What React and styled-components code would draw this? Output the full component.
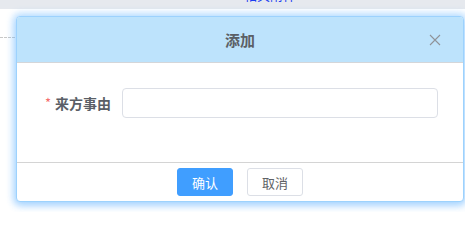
import React from "react";
import styled, { createGlobalStyle } from "styled-components";

const Global = createGlobalStyle`
  html, body { margin: 0; padding: 0; background: #fff; }
  body { font-family: "Noto Sans CJK SC", "Noto Sans", sans-serif; width: 465px; height: 212px; overflow: hidden; }
`;

const Page = styled.div`
  display: flex;
  flex-direction: column;
  width: 465px;
  height: 212px;
  overflow: hidden;
`;

const TopBar = styled.div`
  height: 9px;
  background: #e6e9ee;
  overflow: hidden;
  display: flex;
  justify-content: flex-start;
  padding-left: 244px;
`;

const TopLink = styled.span`
  font-size: 13px;
  line-height: 13px;
  color: #1a3df0;
  margin-top: -12px;
  white-space: nowrap;
`;

const Stage = styled.div`
  display: flex;
  flex-direction: row;
  padding-top: 7px;
`;

const Gutter = styled.div`
  width: 15px;
  margin-top: 21px;
  height: 0;
  border-top: 1px dashed #c8c8c8;
  margin-right: 1px;
`;

const Dialog = styled.div`
  width: 446px;
  height: 184px;
  border: 1px solid #9dd2fd;
  border-radius: 4px;
  background: #fff;
  box-shadow: 0 0 7px 3px rgba(120, 190, 255, 0.45), 0 3px 8px rgba(64, 158, 255, 0.3);
  display: flex;
  flex-direction: column;
  overflow: hidden;
`;

const Header = styled.div`
  height: 45px;
  background: #bde3fc;
  border-bottom: 1px solid #d4d6d9;
  display: flex;
  align-items: center;
  justify-content: center;
  position: relative;
  flex-shrink: 0;
`;

const Title = styled.span`
  font-size: 15px;
  font-weight: 700;
  color: #5b5f66;
`;

const Close = styled.button`
  position: absolute;
  right: 22px;
  top: 17px;
  width: 12px;
  height: 12px;
  padding: 0;
  border: none;
  background: transparent;
  display: flex;
`;

const Body = styled.div`
  flex: 1;
  display: flex;
  align-items: flex-start;
  padding: 25px 25px 0 28px;
  border-bottom: 1px solid #d4d4d4;
`;

const FormItem = styled.div`
  display: flex;
  align-items: center;
  width: 100%;
`;

const Label = styled.label`
  width: 77px;
  flex-shrink: 0;
  font-size: 14px;
  font-weight: 700;
  color: #5a5e66;
  display: flex;
  align-items: center;
  white-space: nowrap;
`;

const Star = styled.span`
  color: #f56c6c;
  font-weight: 400;
  font-size: 13px;
  margin-right: 4px;
  position: relative;
  top: -1px;
`;

const Input = styled.input`
  flex: 1;
  height: 28px;
  box-sizing: content-box;
  border: 1px solid #dcdfe6;
  border-radius: 4px;
  padding: 0 10px;
  outline: none;
  font-size: 13px;
`;

const Footer = styled.div`
  height: 38px;
  flex-shrink: 0;
  display: flex;
  justify-content: center;
  align-items: flex-start;
  padding-top: 5px;
  box-sizing: border-box;
  gap: 14px;
`;

const Button = styled.button`
  width: 56px;
  height: 28px;
  border-radius: 3px;
  font-family: "Noto Sans CJK SC", sans-serif;
  font-size: 13px;
  padding: 0;
  border: 1px solid ${(p) => (p.$primary ? "#409eff" : "#dcdfe6")};
  background: ${(p) => (p.$primary ? "#409eff" : "#fff")};
  color: ${(p) => (p.$primary ? "#fff" : "#606266")};
`;

export default function App() {
  return (
    <Page>
      <Global />
      <TopBar>
        <TopLink>相关附件</TopLink>
      </TopBar>
      <Stage>
        <Gutter />
        <Dialog>
          <Header>
            <Title>添加</Title>
            <Close aria-label="close">
              <svg width="12" height="12" viewBox="0 0 12 12">
                <path d="M1 1L11 11M11 1L1 11" stroke="#8f9399" strokeWidth="1.1" fill="none" />
              </svg>
            </Close>
          </Header>
          <Body>
            <FormItem>
              <Label>
                <Star>*</Star>来方事由
              </Label>
              <Input />
            </FormItem>
          </Body>
          <Footer>
            <Button $primary>确认</Button>
            <Button>取消</Button>
          </Footer>
        </Dialog>
      </Stage>
    </Page>
  );
}
